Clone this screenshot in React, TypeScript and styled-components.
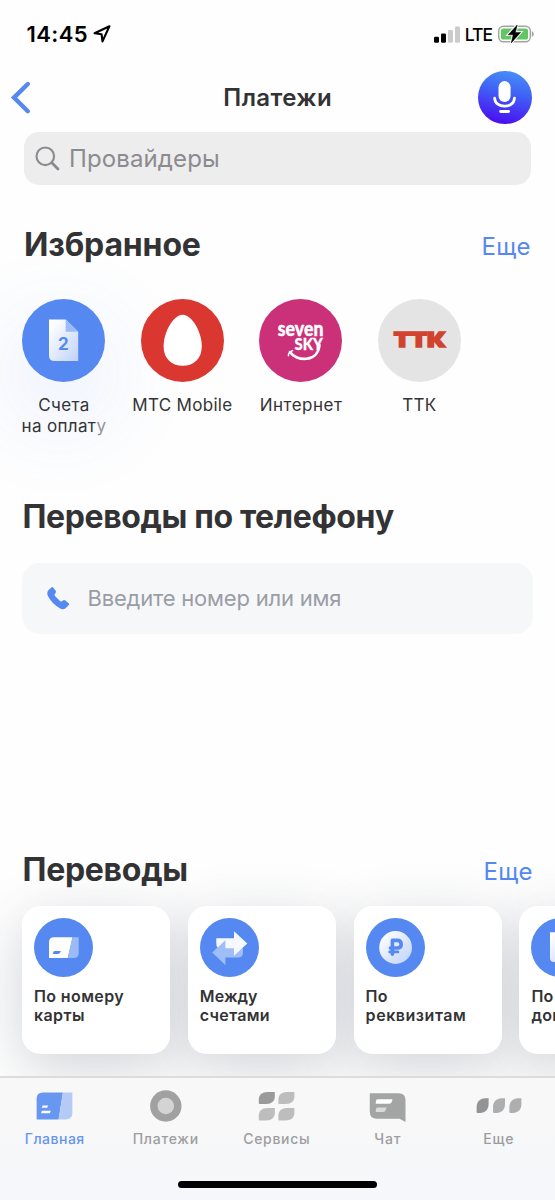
import React from "react";
import styled, { createGlobalStyle, css } from "styled-components";

const BLUE = "#5589f1";
const INK = "#333335";

const GlobalStyle = createGlobalStyle`
  * { box-sizing: border-box; }
  body { margin: 0; background: #fefefe; font-family: Inter, "Liberation Sans", sans-serif; color: ${INK}; }
  svg { display: block; flex: none; overflow: visible; }
  button { font: inherit; color: inherit; border: 0; padding: 0; background: none; }
`;

const Screen = styled.div`
  width: 555px;
  height: 1200px;
  overflow: hidden;
  display: flex;
  flex-direction: column;
  background: #fefefe;
`;

const StatusBar = styled.header`
  height: 68px;
  flex: none;
  display: flex;
  align-items: center;
  justify-content: space-between;
  padding: 0 21px 0 26.500px;
  color: #000;
`;

const Clock = styled.div`
  display: flex;
  align-items: center;
  gap: 5px;
  font-size: 22px;
  font-weight: 600;
  letter-spacing: 0.4px;
`;

const Indicators = styled.div`
  display: flex;
  align-items: center;
  gap: 5px;
`;

const Network = styled.span`
  font-size: 17.5px;
  font-weight: 500;
  letter-spacing: -1px;
  padding: 1px 1px 0 0;
`;

const NavBar = styled.nav`
  height: 60px;
  flex: none;
  display: grid;
  grid-template-columns: 100px 1fr 100px;
  align-items: center;
  padding: 0 23.500px 0 10px;
`;

const NavTitle = styled.h1`
  margin: 0 0 2px 14px;
  text-align: center;
  font-size: 24px;
  font-weight: 600;
  letter-spacing: 0.4px;
`;

const MicButton = styled.button`
  justify-self: end;
  width: 53.5px;
  height: 53.5px;
  margin-bottom: 1px;
  border-radius: 50%;
  background: linear-gradient(192deg, #4792f8 4%, #4060f6 42%, #4a0df1 92%);
`;

const SearchField = styled.div`
  flex: none;
  height: 53px;
  margin: 4px 24px 0;
  padding: 0 11px;
  border-radius: 15px;
  background: #ededee;
  display: flex;
  align-items: center;
  gap: 9px;
  font-size: 24px;
  letter-spacing: 0.12px;
  color: #8b8b8f;
`;

const SectionHead = styled.div<{ $top: number; $left?: number; $right?: number }>`
  flex: none;
  height: 40px;
  margin-top: ${(p) => p.$top}px;
  padding: 0 ${(p) => p.$right ?? 24}px 0 ${(p) => p.$left ?? 22.5}px;
  display: flex;
  align-items: center;
  justify-content: space-between;
`;

const SectionTitle = styled.h2<{ $tracking: number }>`
  margin: 0;
  font-size: 32px;
  line-height: 40px;
  font-weight: 700;
  letter-spacing: ${(p) => p.$tracking}px;
`;

const MoreLink = styled.a`
  font-size: 24px;
  line-height: 40px;
  letter-spacing: 0.4px;
  color: ${BLUE};
  padding-top: 3px;
`;

const Favourites = styled.div`
  flex: none;
  height: 196px;
  padding: 34px 0 0 4.5px;
  display: flex;
`;

const Favourite = styled.div`
  width: 118.5px;
  display: flex;
  flex-direction: column;
  align-items: center;
  gap: 13px;
`;

const Badge = styled.div<{ $color: string; $glow?: boolean }>`
  width: 83px;
  height: 83px;
  flex: none;
  border-radius: 50%;
  background: ${(p) => p.$color};
  ${(p) =>
    p.$glow &&
    css`
      box-shadow: -4px 32px 90px 8px rgba(85, 137, 241, 0.14);
    `}
`;

const FavouriteLabel = styled.div<{ $tracking: number }>`
  font-size: 17px;
  line-height: 21px;
  text-align: center;
  white-space: pre;
  letter-spacing: ${(p) => p.$tracking}px;
  margin-right: -${(p) => p.$tracking}px;
`;

const Fading = styled.span`
  color: #939396;
`;

const PhoneField = styled.div`
  flex: none;
  height: 71px;
  margin: 26px 22px 0;
  padding: 0 24px 2px;
  border-radius: 18px;
  background: #f6f7f9;
  display: flex;
  align-items: center;
  gap: 17.500px;
  font-size: 22px;
  letter-spacing: -0.2px;
  color: #9a9da6;
`;

const Cards = styled.div`
  position: relative;
  z-index: 0;
  flex: none;
  width: max-content;
  display: flex;
  gap: 17.8px;
  padding: 16px 22px 0;
`;

const Card = styled.article`
  position: relative;
  width: 148px;
  height: 147.500px;
  border-radius: 19px;
  background: #fff;
  padding: 12px;
  font-size: 16px;
  font-weight: 600;
  line-height: 19.3px;

  &::before {
    content: "";
    position: absolute;
    inset: 0;
    z-index: -1;
    border-radius: 19px;
    box-shadow: 0 14px 56px rgba(50, 60, 82, 0.22);
  }
`;

const CardIcon = styled.div`
  width: 59px;
  height: 59px;
  border-radius: 50%;
  background: ${BLUE};
  margin-bottom: 10px;
`;

const CardLine = styled.div<{ $tracking: number }>`
  white-space: nowrap;
  letter-spacing: ${(p) => p.$tracking}px;
`;

const TabBar = styled.footer`
  position: relative;
  z-index: 1;
  flex: none;
  height: 124px;
  margin-top: auto;
  border-top: 2px solid #dcdcdd;
  background: linear-gradient(#f8f8f8 35%, #f5f7fb 100%);
  display: flex;
  flex-direction: column;
  align-items: center;
  justify-content: space-between;
  padding-bottom: 12px;
`;

const Tabs = styled.div`
  display: grid;
  grid-template-columns: repeat(5, 111px);
  margin-right: 1.500px;
`;

const Tab = styled.div<{ $active?: boolean; $tracking: number }>`
  display: flex;
  flex-direction: column;
  align-items: center;
  gap: 3px;
  padding-top: 10px;
  font-size: 14px;
  line-height: 20px;
  font-weight: 500;
  letter-spacing: ${(p) => p.$tracking}px;
  color: ${(p) => (p.$active ? "#6494f2" : "#9d9d9f")};
`;

const HomeIndicator = styled.div`
  width: 199px;
  height: 7.5px;
  border-radius: 4px;
  background: #000;
`;

const BoltPath = "M20 0 L11 9.8 H16 L14 18 L23.4 7.4 H18.2 Z";

function DocIcon() {
  return (
    <svg width="83" height="83" viewBox="0 0 83 83">
      <defs>
        <linearGradient id="doc" x1="0" y1="0" x2="1" y2="1">
          <stop offset="0.1" stopColor="#fff" />
          <stop offset="1" stopColor="#bfd2f9" />
        </linearGradient>
      </defs>
      <path d="M27 20.6H43.7L56.2 32.8V62H32.5Q27 62 27 56.5Z" fill="url(#doc)" />
      <path d="M43.7 20.6L56.2 32.8H43.7Z" fill="#9dbcf7" />
      <text x="41.4" y="51.4" textAnchor="middle" fontFamily="Inter" fontWeight="700" fontSize="17" fill={BLUE}>2</text>
    </svg>
  );
}

function EggIcon() {
  return (
    <svg width="83" height="83" viewBox="0 0 83 83">
      <path d="M41.7 15.7C51 15.7 60.8 33 60.8 47.3C60.8 59.5 53.2 66.8 41.7 66.8C30.2 66.8 22.6 59.5 22.6 47.3C22.6 33 32.4 15.7 41.7 15.7Z" fill="#fff" />
    </svg>
  );
}

function SevenSkyIcon() {
  return (
    <svg width="83" height="83" viewBox="0 0 83 83" fill="#fff" fontFamily="Lato" fontWeight="900" stroke="#fff" strokeLinejoin="round" strokeLinecap="round">
      <text x="18.8" y="37" fontSize="20" textLength="45.6" lengthAdjust="spacingAndGlyphs" strokeWidth="0.4">seven</text>
      <text x="35.6" y="51" fontSize="17" textLength="28.2" lengthAdjust="spacingAndGlyphs" strokeWidth="0.3">SKY</text>
      <path d="M31 53C37 62.5 59 64 60.5 46" fill="none" strokeWidth="2.6" />
      <path d="M29.4 56.8Q29.2 53.4 33.6 51.6" fill="none" strokeWidth="1.5" />
    </svg>
  );
}

function TtkIcon() {
  return (
    <svg width="83" height="83" viewBox="0 0 83 83">
      <text x="15.8" y="48.400" fontFamily="Inter" fontWeight="900" fontSize="19.5" textLength="52" lengthAdjust="spacingAndGlyphs" fill="#d0442f" stroke="#d0442f" strokeWidth="1.6">ТТК</text>
    </svg>
  );
}

function CardTransferIcon() {
  return (
    <svg width="59" height="59" viewBox="0 0 59 59">
      <path d="M20 19.3H38.5L33.8 40H15V24.3Q15 19.3 20 19.3Z" fill="#fff" />
      <path d="M38.5 19.3H44.7V35Q44.7 40 39.7 40H33.8Z" fill="#9bbbf7" />
      <path d="M20.8 33H26.8L26.2 34.6Q25.6 36 24 36H18.7L19.3 34.3Q19.7 33 20.8 33Z" fill={BLUE} />
    </svg>
  );
}

function SwapIcon() {
  return (
    <svg width="59" height="59" viewBox="0 0 59 59">
      <path d="M16.3 20.2H36V30.7H21.5Q16.3 30.7 16.3 25.5Z" fill="#f5f8ff" />
      <path d="M12.2 34.6L25.4 22.2V30.5H43V34.5Q43 39.5 38 39.5H25.4V47Z" fill="#9fbef8" />
      <path d="M34 13.2L47.3 25.5L34 37.8Z" fill="#f5f8ff" />
    </svg>
  );
}

function RoubleIcon() {
  return (
    <svg width="59" height="59" viewBox="0 0 59 59">
      <defs>
        <linearGradient id="coin" x1="0.1" y1="0.1" x2="0.9" y2="0.9">
          <stop offset="0.1" stopColor="#f8faff" />
          <stop offset="1" stopColor="#c3d5fa" />
        </linearGradient>
      </defs>
      <circle cx="29.6" cy="29.5" r="16.4" fill="url(#coin)" />
      <path d="M26.400 36.3V22.4H31.2Q35.2 22.4 35.2 26.2Q35.2 30 31.2 30H24.4" fill="none" stroke={BLUE} strokeWidth="3.6" strokeLinecap="round" strokeLinejoin="round" />
      <path d="M23.7 33.900H32" stroke={BLUE} strokeWidth="2.6" strokeLinecap="round" />
    </svg>
  );
}

function ContractIcon() {
  return (
    <svg width="59" height="59" viewBox="0 0 59 59">
      <path d="M19 14.3H33L41 22V44H23Q19 44 19 40Z" fill="url(#doc)" />
    </svg>
  );
}

type LeafProps = { x: number; y: number; w: number; h: number; fill: string };

function Leaf({ x, y, w, h, fill }: LeafProps) {
  const rx = Math.min(w * 0.72, 8.5);
  const ry = h * 0.6;
  return (
    <path
      transform={`translate(${x} ${y})`}
      d={`M${rx} 0H${w}V${h - ry}C${w} ${h - ry * 0.4} ${w - rx * 0.4} ${h} ${w - rx} ${h}H1Q0 ${h} 0 ${h - 1}V${ry}C0 ${ry * 0.4} ${rx * 0.4} 0 ${rx} 0Z`}
      fill={fill}
    />
  );
}

const tabs = [
  {
    label: "Главная",
    tracking: 0.5,
    icon: (
      <svg width="37" height="38" viewBox="0 0 37 38">
        <path d="M7 4.6H26.9L22.6 31.6H.6V11Q.6 4.6 7 4.6Z" fill="#6797f0" />
        <path d="M26.9 4.6H36.4V24.6Q36.4 31.6 29.4 31.6H22.6Z" fill="#b5cbf6" />
        <path d="M6.6 17.6H12L11.2 19.8H5.8ZM6 22.8H14.8L13.8 25.2H5Z" fill="#fff" />
      </svg>
    ),
  },
  {
    label: "Платежи",
    tracking: 0.75,
    icon: (
      <svg width="37" height="38" viewBox="0 0 37 38">
        <circle cx="18.8" cy="18" r="12" fill="#d4d4d4" stroke="#a1a1a1" strokeWidth="7.4" />
      </svg>
    ),
  },
  {
    label: "Сервисы",
    tracking: 0.7,
    icon: (
      <svg width="37" height="38" viewBox="0 0 37 38">
        <Leaf x={0.8} y={4} w={16} h={12} fill="#9a9a9a" />
        <Leaf x={20.4} y={4} w={16} h={12} fill="#bdbdbd" />
        <Leaf x={0.8} y={20} w={16} h={12.4} fill="#bdbdbd" />
        <Leaf x={20.4} y={20} w={16} h={12.4} fill="#bdbdbd" />
      </svg>
    ),
  },
  {
    label: "Чат",
    tracking: 0.9,
    icon: (
      <svg width="37" height="38" viewBox="0 0 37 38">
        <path d="M.8 5.2H29.5Q36.5 5.2 36.5 12.2V34L30.6 30.8H7.8Q.8 30.8 .8 23.8Z" fill="#a3a4a4" />
        <path d="M9 11.3H23.6L22.8 13.8Q22.2 15.8 20.2 15.8H6.8V13.5Q6.8 11.3 9 11.3Z" fill="#fff" />
        <path d="M9 19.4H17.6L16.8 21.9Q16.2 23.9 14.2 23.9H6.8V21.6Q6.8 19.4 9 19.4Z" fill="#dadada" />
      </svg>
    ),
  },
  {
    label: "Еще",
    tracking: 0.9,
    icon: (
      <svg width="46" height="38" viewBox="0 0 46 38">
        <Leaf x={0.6} y={10.2} w={12} h={14.8} fill="#929496" />
        <Leaf x={17} y={10.2} w={12} h={14.8} fill="#acaeb0" />
        <Leaf x={33.4} y={10.2} w={12} h={14.8} fill="#acaeb0" />
      </svg>
    ),
  },
];

const cards = [
  { icon: <CardTransferIcon />, lines: [["По номеру", 0.38], ["карты", 0.4]] },
  { icon: <SwapIcon />, lines: [["Между", 0.1], ["счетами", 0.3]] },
  { icon: <RoubleIcon />, lines: [["По", 0.2], ["реквизитам", 0.55]] },
  { icon: <ContractIcon />, lines: [["По", 0.2], ["договору", 0.3]] },
] as { icon: React.ReactNode; lines: [string, number][] }[];

export default function App() {
  return (
    <Screen>
      <GlobalStyle />
      <StatusBar>
        <Clock>
          14:45
          <svg width="18" height="18" viewBox="0 0 18 18">
            <path d="M16.4 1.2L1.6 8.3L8.6 9.3L9.5 16.4Z" fill="none" stroke="#000" strokeWidth="2.1" strokeLinejoin="round" />
          </svg>
        </Clock>
        <Indicators>
          <svg width="26" height="17" viewBox="0 0 26 17">
            <rect x="0" y="10.8" width="5" height="6" rx="1.3" />
            <rect x="7" y="7.6" width="5" height="9.2" rx="1.3" />
            <rect x="14" y="4" width="5" height="12.8" rx="1.3" fill="#cbcbcb" />
            <rect x="21" y=".6" width="5" height="16.2" rx="1.3" fill="#cbcbcb" />
          </svg>
          <Network>LTE</Network>
          <svg width="36" height="18" viewBox="0 0 36 18">
            <rect x=".7" y="1.2" width="31.6" height="15.6" rx="4.8" fill="none" stroke="#a3a3a3" strokeWidth="1.4" />
            <path d="M33.8 6V12Q35.8 11 35.8 9T33.8 6Z" fill="#a3a3a3" />
            <rect x="2.9" y="3.4" width="27.2" height="11.2" rx="2.6" fill="#62c566" />
            <path d={BoltPath} transform="translate(-.8 0)" stroke="#fff" strokeWidth="2.6" />
            <path d={BoltPath} transform="translate(-.8 0)" stroke="#000" strokeWidth=".5" />
          </svg>
        </Indicators>
      </StatusBar>

      <NavBar>
        <svg width="22" height="34" viewBox="0 0 22 34">
          <path d="M17.8 3L4 16.6L17.8 30.2" fill="none" stroke={BLUE} strokeWidth="4.4" strokeLinecap="round" />
        </svg>
        <NavTitle>Платежи</NavTitle>
        <MicButton>
          <svg width="53.5" height="53.5" viewBox="0 0 54 54">
            <rect x="20.7" y="10.2" width="12.2" height="21.2" rx="6.1" fill="#fff" />
            <path d="M16.8 27.4C17 38.2 36.6 38.2 36.8 27.4" fill="none" stroke="#fff" strokeWidth="2.7" strokeLinecap="round" />
            <path d="M22.9 40.8H30.8" stroke="#fff" strokeWidth="3" strokeLinecap="round" />
          </svg>
        </MicButton>
      </NavBar>

      <SearchField>
        <svg width="25" height="25" viewBox="0 0 25 25" fill="none" stroke="#8b8b8f" strokeLinecap="round">
          <circle cx="10.3" cy="10.3" r="8.8" strokeWidth="2.1" />
          <path d="M16.8 16.8L23 23" strokeWidth="2.8" />
        </svg>
        Провайдеры
      </SearchField>

      <SectionHead $top={40} $left={24}>
        <SectionTitle $tracking={-0.15}>Избранное</SectionTitle>
        <MoreLink>Еще</MoreLink>
      </SectionHead>
      <Favourites>
        <Favourite>
          <Badge $color={BLUE} $glow><DocIcon /></Badge>
          <FavouriteLabel $tracking={0.35}>
            {"Счета\nна оплат"}<Fading>у</Fading>
          </FavouriteLabel>
        </Favourite>
        <Favourite>
          <Badge $color="#da3731"><EggIcon /></Badge>
          <FavouriteLabel $tracking={0.3}>МТС Mobile</FavouriteLabel>
        </Favourite>
        <Favourite>
          <Badge $color="#cb3179"><SevenSkyIcon /></Badge>
          <FavouriteLabel $tracking={0.5}>Интернет</FavouriteLabel>
        </Favourite>
        <Favourite>
          <Badge $color="#e4e4e4"><TtkIcon /></Badge>
          <FavouriteLabel $tracking={0.2}>ТТК</FavouriteLabel>
        </Favourite>
      </Favourites>

      <SectionHead $top={36}>
        <SectionTitle $tracking={-0.37}>Переводы по телефону</SectionTitle>
      </SectionHead>
      <PhoneField>
        <svg width="24" height="24" viewBox="0 0 24 24">
          <path d="M5.8 1.2Q6.3.7 6.9 1.3L9.7 4.8Q10.3 5.8 9.6 6.9L8.6 8.4Q8.4 9.2 9 10L14 14.9Q14.8 15.7 15.8 15.2L17.4 14.2Q18.4 13.7 19.3 14.4L22.9 17.5Q23.6 18.2 23 18.8L19.6 22.2Q17 24.2 13.8 22.3Q5.500 17 1.900 9.900Q.4 6.600 2.600 4Z" fill={BLUE} />
        </svg>
        Введите номер или имя
      </PhoneField>

      <SectionHead $top={216} $right={22}>
        <SectionTitle $tracking={-0.27}>Переводы</SectionTitle>
        <MoreLink>Еще</MoreLink>
      </SectionHead>
      <Cards>
        {cards.map((card, i) => (
          <Card key={i}>
            <CardIcon>{card.icon}</CardIcon>
            {card.lines.map(([text, tracking]) => (
              <CardLine key={text} $tracking={tracking}>{text}</CardLine>
            ))}
          </Card>
        ))}
      </Cards>

      <TabBar>
        <Tabs>
          {tabs.map((tab, i) => (
            <Tab key={tab.label} $active={i === 0} $tracking={tab.tracking}>
              {tab.icon}
              {tab.label}
            </Tab>
          ))}
        </Tabs>
        <HomeIndicator />
      </TabBar>
    </Screen>
  );
}
